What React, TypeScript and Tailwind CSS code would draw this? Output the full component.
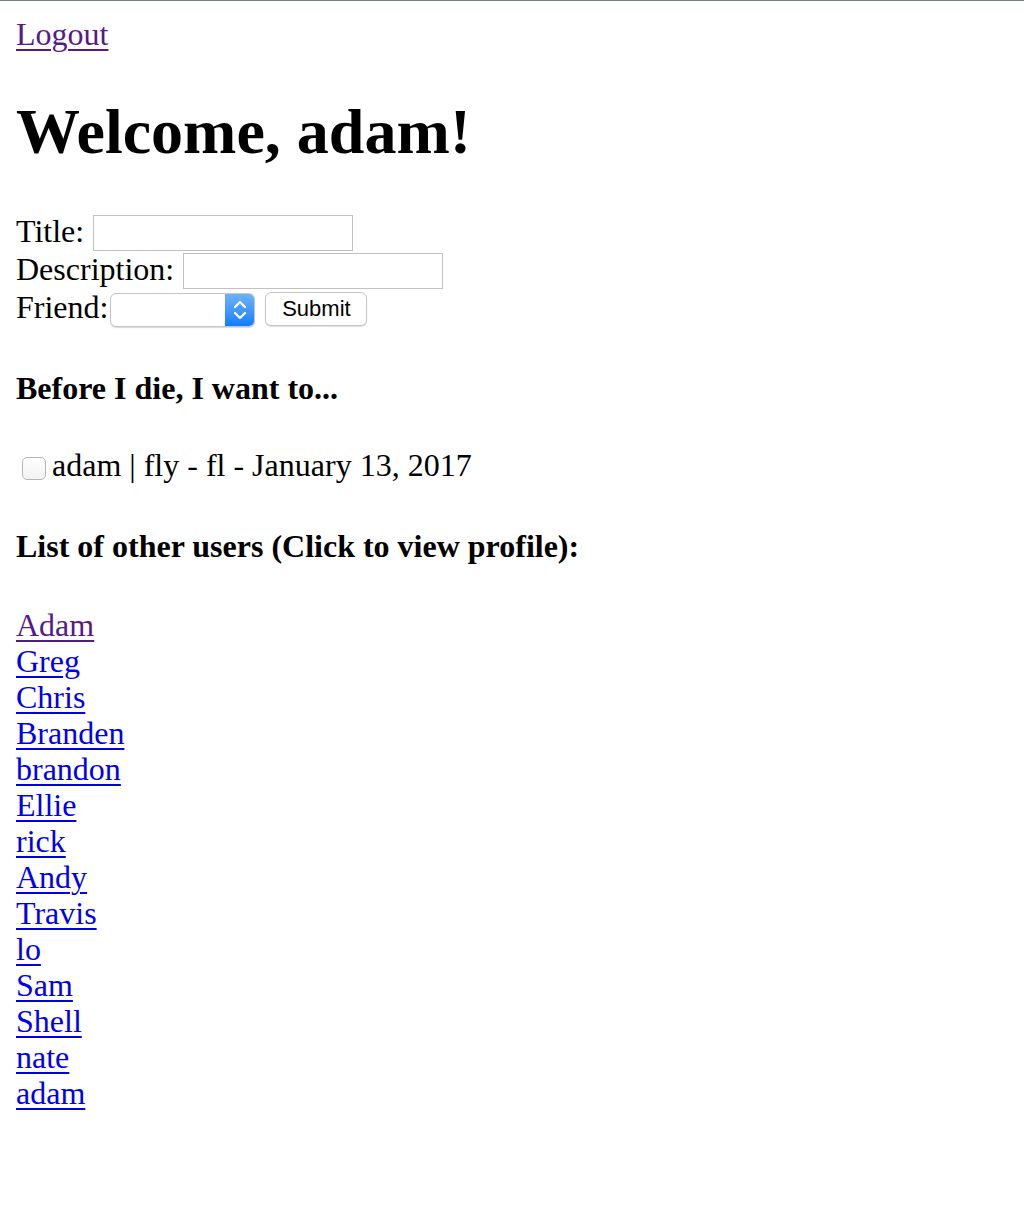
const users = [
  "Adam",
  "Greg",
  "Chris",
  "Branden",
  "brandon",
  "Ellie",
  "rick",
  "Andy",
  "Travis",
  "lo",
  "Sam",
  "Shell",
  "nate",
  "adam",
];

function SelectArrows() {
  return (
    <svg width="14" height="22" viewBox="0 0 14 22" fill="none">
      <path d="M2 8 L7 3 L12 8" stroke="white" strokeWidth="2.2" strokeLinecap="round" strokeLinejoin="round" />
      <path d="M2 14 L7 19 L12 14" stroke="white" strokeWidth="2.2" strokeLinecap="round" strokeLinejoin="round" />
    </svg>
  );
}

export default function App() {
  return (
    <div className="min-h-[1220px] w-full border-t border-[#6f8582] bg-white px-4 pt-[15px] font-['Liberation_Serif',_'Times_New_Roman',_serif] text-[32px] leading-[36px] text-black">
      {/* Logout */}
      <div>
        <a href="#" className="text-[#551a8b] underline decoration-[2px] underline-offset-[4px]">
          Logout
        </a>
      </div>

      <h1 className="mt-[43px] mb-[43px] text-[64px] font-bold leading-[74px]">Welcome, adam!</h1>

      {/* Add form */}
      <form className="flex flex-col" onSubmit={(e) => e.preventDefault()}>
        <div className="flex h-[38px] items-start">
          <span className="mt-[1px]">Title:</span>
          <input type="text" className="ml-[9px] mt-[3px] h-[36px] w-[260px] border border-[#c1c1c1] bg-white outline-none" />
        </div>
        <div className="flex h-[37px] items-start">
          <span className="mt-[1px]">Description:</span>
          <input type="text" className="ml-[9px] mt-[3px] h-[36px] w-[260px] border border-[#c1c1c1] bg-white outline-none" />
        </div>
        <div className="flex h-[41px] items-start">
          <span className="mt-[2px]">Friend:</span>
          <div className="ml-[2px] mt-[6px] flex h-[34px] w-[145px] overflow-hidden rounded-[6px] border border-[#c4c4c4] bg-white shadow-[0_1px_1px_rgba(0,0,0,0.15)]">
            <div className="flex-1" />
            <div className="flex w-[29px] items-center justify-center bg-gradient-to-b from-[#6cb3fa] to-[#0a7cff]">
              <SelectArrows />
            </div>
          </div>
          <button
            type="submit"
            className="ml-[10px] mt-[5px] h-[34px] w-[102px] rounded-[6px] border border-[#c6c6c6] bg-white font-['Liberation_Sans',_Arial,_sans-serif] text-[22px] leading-[32px] text-black shadow-[0_1px_1px_rgba(0,0,0,0.12)]"
          >
            Submit
          </button>
        </div>
      </form>

      <h4 className="mt-[42px] mb-[40px] text-[32px] font-bold leading-[36px]">Before I die, I want to...</h4>

      <div className="flex h-[39px] items-start">
        <span className="ml-[6px] mr-[6px] mt-[11px] inline-block h-[23px] w-[24px] rounded-[5px] border border-[#b5b5b5] bg-gradient-to-b from-white to-[#f2f2f2]" />
        <span className="mt-[1px]">adam | fly - fl - January 13, 2017</span>
      </div>

      <h4 className="mt-[43px] mb-[43px] text-[32px] font-bold leading-[36px]">
        List of other users (Click to view profile):
      </h4>

      <ul className="flex flex-col">
        {users.map((u, i) => (
          <li key={i}>
            <a
              href="#"
              className={
                i === 0
                  ? "text-[#551a8b] underline decoration-[2px] underline-offset-[4px]"
                  : "text-[#0000ee] underline decoration-[2px] underline-offset-[4px]"
              }
            >
              {u}
            </a>
          </li>
        ))}
      </ul>
    </div>
  );
}
